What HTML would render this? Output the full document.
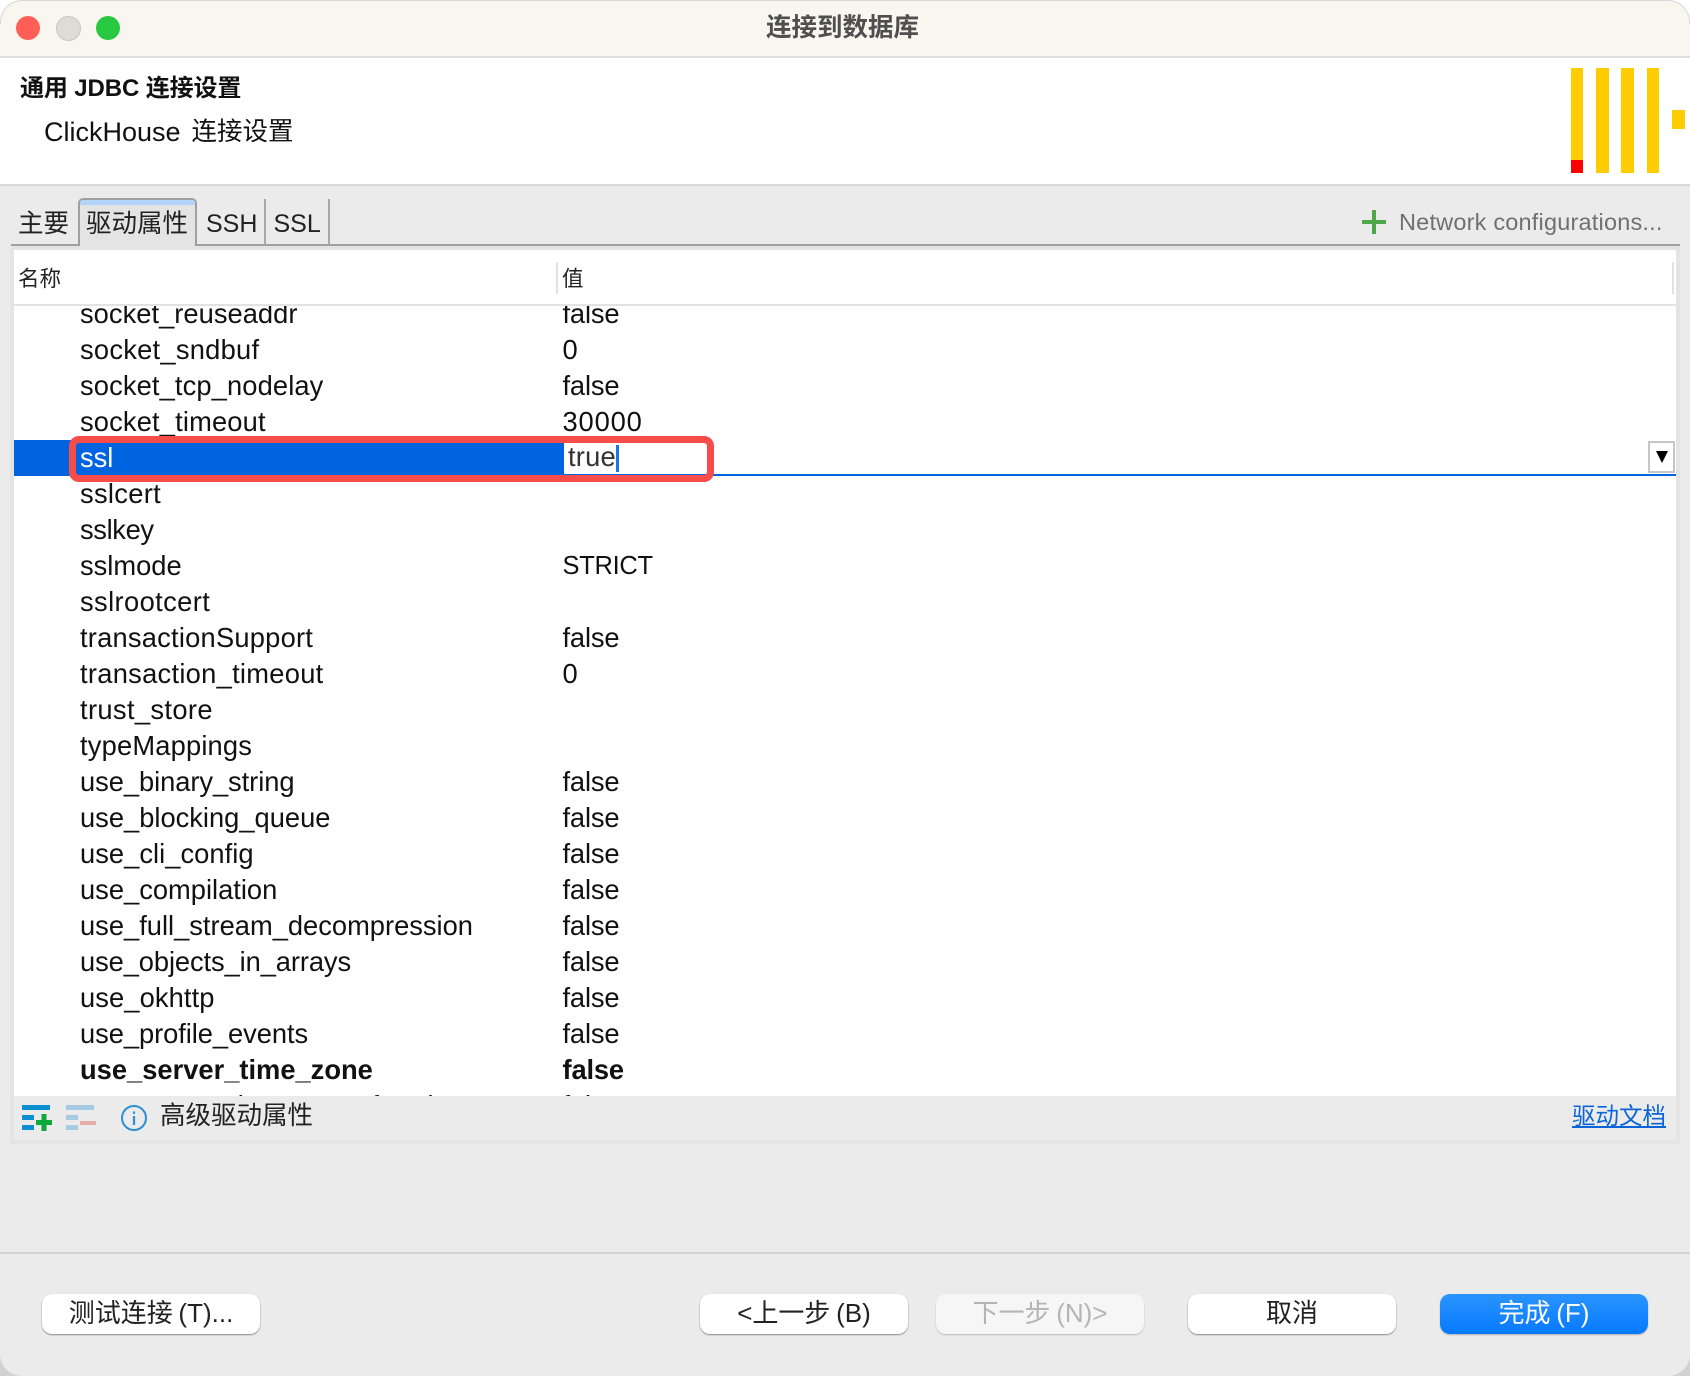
<!DOCTYPE html>
<html lang="zh"><head><meta charset="utf-8"><title>连接到数据库</title>
<style>
html,body{margin:0;padding:0}
body{width:1690px;height:1376px;position:relative;overflow:hidden;background:linear-gradient(#fff 0,#fff 50%,#d2d2d2 50%);font-family:"Liberation Sans","Noto Sans CJK SC",sans-serif;color:#111}
.a{position:absolute}
.t{position:absolute;white-space:nowrap;line-height:36px;height:36px}
#win{position:absolute;left:0;top:0;width:1690px;height:1376px;background:#ebebeb;border-radius:22px;overflow:hidden}
.row{position:absolute;left:0;width:1662px;height:36px;line-height:36px;font-size:27.3px;white-space:nowrap}
.row span{position:absolute;top:0}
.n{left:66px}.v{left:548.5px;letter-spacing:-.15px}
.btn{position:absolute;top:1294px;height:40px;line-height:38px;background:#fff;border-radius:10px;text-align:center;font-size:26px;word-spacing:-1.5px;box-shadow:0 1px 1.5px rgba(0,0,0,.4),0 0 1px rgba(0,0,0,.1);color:#222}
</style></head><body>
<div id="win">
<div class="a" style="left:0;top:0;width:1690px;height:56px;background:#f9f6f0;border-bottom:2px solid #dedede"></div>
<div class="a" style="left:0;top:0;width:1690px;height:24px;box-sizing:border-box;border:1.5px solid #d6d6d6;border-bottom:none;border-radius:22px 22px 0 0"></div>
<div class="a" style="left:16px;top:16px;width:24px;height:24px;border-radius:50%;background:#ff5f57"></div>
<div class="a" style="left:56px;top:16px;width:23px;height:23px;border-radius:50%;background:#dfdcd7;border:1px solid #c8c6c2"></div>
<div class="a" style="left:96px;top:16px;width:24px;height:24px;border-radius:50%;background:#28c840"></div>
<div class="t" style="left:766px;top:9.5px;font-size:25.5px;font-weight:700;color:#4f4f4f">连接到数据库</div>

<div class="a" style="left:0;top:58px;width:1690px;height:126px;background:#fff;border-bottom:2px solid #d8d8d8"></div>
<div class="t" style="left:20px;top:71px;font-size:24px;font-weight:700;color:#111;letter-spacing:-.12px">通用 JDBC 连接设置</div>
<div class="t" style="left:44px;top:114px;font-size:27px;color:#111">ClickHouse</div>
<div class="t" style="left:191.5px;top:113.5px;font-size:25.5px;color:#111">连接设置</div>
<div class="a" style="left:1570.5px;top:67.5px;width:12.5px;height:105px;background:#ffcc01"></div>
<div class="a" style="left:1570.5px;top:160px;width:12.5px;height:12.5px;background:#f00"></div>
<div class="a" style="left:1596px;top:67.5px;width:12.5px;height:105px;background:#ffcc01"></div>
<div class="a" style="left:1621px;top:67.5px;width:12.5px;height:105px;background:#ffcc01"></div>
<div class="a" style="left:1646.5px;top:67.5px;width:12.5px;height:105px;background:#ffcc01"></div>
<div class="a" style="left:1672px;top:110px;width:12.5px;height:19px;background:#ffcc01"></div>

<!-- tabs -->
<div class="a" style="left:11px;top:244px;width:1669px;height:2px;background:#a0a0a0"></div>
<div class="a" style="left:78px;top:198px;width:119px;height:48px;background:#e4e4e4;border:2px solid #a0a0a0;border-bottom:none;box-sizing:border-box;border-radius:5px 5px 0 0"></div>
<div class="a" style="left:80px;top:200px;width:115px;height:5px;background:#b2d4fb;border-radius:3px 3px 0 0"></div>
<div class="a" style="left:264px;top:199px;width:2px;height:46px;background:#a8a8a8"></div>
<div class="a" style="left:328px;top:199px;width:2px;height:46px;background:#a8a8a8"></div>
<div class="t" style="left:18px;top:206px;font-size:25.5px;color:#222">主要</div>
<div class="t" style="left:86px;top:206px;font-size:25.5px;color:#222">驱动属性</div>
<div class="t" style="left:206px;top:206px;font-size:25px;color:#222">SSH</div>
<div class="t" style="left:273.5px;top:206px;font-size:25px;color:#222">SSL</div>
<svg class="a" style="left:1361px;top:209px" width="26" height="26"><path d="M1 13H25M13 1V25" stroke="#4ea748" stroke-width="4" fill="none"/></svg>
<div class="t" style="left:1399px;top:204px;font-size:23.5px;color:#707070;letter-spacing:.2px">Network configurations...</div>

<!-- table -->
<div class="a" style="left:10px;top:246px;width:1670px;height:898px;background:#e4e4e4"></div>
<div class="a" style="left:14px;top:250px;width:1662px;height:846px;background:#fff"></div>
<div class="a" style="left:14px;top:304px;width:1662px;height:2px;background:#e2e2e2"></div>
<div class="a" style="left:556px;top:262px;width:2px;height:32px;background:#e2e2e2"></div>
<div class="a" style="left:1672px;top:262px;width:2px;height:32px;background:#e2e2e2"></div>
<div class="t" style="left:18px;top:261px;font-size:21.5px;color:#222">名称</div>
<div class="t" style="left:562px;top:261px;font-size:21.5px;color:#222">值</div>

<div class="a" style="left:14px;top:306px;width:1662px;height:790px;overflow:hidden">
<div class="row" style="top:-10px"><span class="n" style="letter-spacing:.03px">socket_reuseaddr</span><span class="v">false</span></div>
<div class="row" style="top:26px"><span class="n" style="letter-spacing:.25px">socket_sndbuf</span><span class="v">0</span></div>
<div class="row" style="top:62px"><span class="n" style="letter-spacing:.12px">socket_tcp_nodelay</span><span class="v">false</span></div>
<div class="row" style="top:98px"><span class="n" style="letter-spacing:.15px">socket_timeout</span><span class="v" style="letter-spacing:.86px">30000</span></div>
<div class="row" style="top:170px"><span class="n" style="letter-spacing:.3px">sslcert</span></div>
<div class="row" style="top:206px"><span class="n" style="letter-spacing:-.36px">sslkey</span></div>
<div class="row" style="top:242px"><span class="n">sslmode</span><span class="v" style="font-size:25.5px;letter-spacing:-.3px">STRICT</span></div>
<div class="row" style="top:278px"><span class="n" style="letter-spacing:.39px">sslrootcert</span></div>
<div class="row" style="top:314px"><span class="n" style="letter-spacing:.22px">transactionSupport</span><span class="v">false</span></div>
<div class="row" style="top:350px"><span class="n" style="letter-spacing:.28px">transaction_timeout</span><span class="v">0</span></div>
<div class="row" style="top:386px"><span class="n" style="letter-spacing:.36px">trust_store</span></div>
<div class="row" style="top:422px"><span class="n" style="letter-spacing:.18px">typeMappings</span></div>
<div class="row" style="top:458px"><span class="n" style="letter-spacing:-.06px">use_binary_string</span><span class="v">false</span></div>
<div class="row" style="top:494px"><span class="n">use_blocking_queue</span><span class="v">false</span></div>
<div class="row" style="top:530px"><span class="n" style="letter-spacing:.04px">use_cli_config</span><span class="v">false</span></div>
<div class="row" style="top:566px"><span class="n">use_compilation</span><span class="v">false</span></div>
<div class="row" style="top:602px"><span class="n">use_full_stream_decompression</span><span class="v">false</span></div>
<div class="row" style="top:638px"><span class="n" style="letter-spacing:-.1px">use_objects_in_arrays</span><span class="v">false</span></div>
<div class="row" style="top:674px"><span class="n" style="letter-spacing:.1px">use_okhttp</span><span class="v">false</span></div>
<div class="row" style="top:710px"><span class="n" style="letter-spacing:-.06px">use_profile_events</span><span class="v">false</span></div>
<div class="row" style="top:746px;font-weight:700"><span class="n">use_server_time_zone</span><span class="v">false</span></div>
<div class="row" style="top:782px"><span class="n">use_server_time_zone_for_dates</span><span class="v">false</span></div>
</div>

<!-- selected row -->
<div class="a" style="left:14px;top:440px;width:550px;height:36px;background:#0064e1"></div>
<div class="a" style="left:564px;top:474px;width:1112px;height:2px;background:#0064e1"></div>
<div class="t" style="left:80px;top:440px;font-size:27.3px;color:#fff">ssl</div>
<div class="t" style="left:568px;top:439px;font-size:27.3px;color:#333;letter-spacing:.2px">true</div>
<div class="a" style="left:616px;top:445px;width:2.5px;height:27px;background:#1a76e8"></div>
<div class="a" style="left:1648px;top:441px;width:27px;height:32px;box-sizing:border-box;background:#fff;border:2px solid #c6c6c6"></div>
<svg class="a" style="left:1656px;top:450px" width="12" height="14"><path d="M0 1H12L6 13Z" fill="#000"/></svg>
<div class="a" style="left:69px;top:436px;width:645px;height:46px;box-sizing:border-box;border:7px solid #f64c4a;border-radius:10px"></div>

<!-- footer -->
<div class="a" style="left:14px;top:1096px;width:1662px;height:44px;background:#ebebeb"></div>
<svg class="a" style="left:20px;top:1100px" width="80" height="36">
<g fill="#0a8fd0"><rect x="2" y="5" width="28" height="5"/><rect x="2" y="15" width="12" height="5"/><rect x="2" y="25" width="12" height="5"/></g>
<path d="M16 22.5H32M24 14V31" stroke="#0ba83c" stroke-width="5" fill="none"/>
<g fill="#a6cbe3"><rect x="46" y="5" width="28" height="5"/><rect x="46" y="15" width="12" height="5"/><rect x="46" y="25" width="12" height="5"/></g>
<rect x="60" y="21" width="16" height="4" fill="#e8aca8"/>
</svg>
<svg class="a" style="left:120px;top:1104px" width="28" height="28">
<circle cx="14" cy="14" r="12" stroke="#2e8fd6" stroke-width="2" fill="none"/>
<rect x="12.9" y="12" width="2.2" height="9" fill="#2e8fd6"/><rect x="12.9" y="7.5" width="2.2" height="2.4" fill="#2e8fd6"/>
</svg>
<div class="t" style="left:160px;top:1098px;font-size:25.5px;color:#222">高级驱动属性</div>
<div class="t" style="left:1572px;top:1098px;font-size:23.5px;color:#0a64d8;text-decoration:underline">驱动文档</div>

<!-- bottom -->
<div class="a" style="left:0;top:1252px;width:1690px;height:2px;background:#d4d4d4"></div>
<div class="btn" style="left:42px;width:218px">测试连接 (T)...</div>
<div class="btn" style="left:700px;width:208px">&lt;上一步 (B)</div>
<div class="btn" style="left:936px;width:208px;background:#f6f6f6;color:#b4b4b4;box-shadow:0 1px 1.5px rgba(0,0,0,.2)">下一步 (N)&gt;</div>
<div class="btn" style="left:1188px;width:208px">取消</div>
<div class="btn" style="left:1440px;width:208px;background:linear-gradient(#2a94ff,#0679ff);color:#fff;box-shadow:0 1px 1.5px rgba(0,0,0,.25)">完成 (F)</div>
</div>
</body></html>
